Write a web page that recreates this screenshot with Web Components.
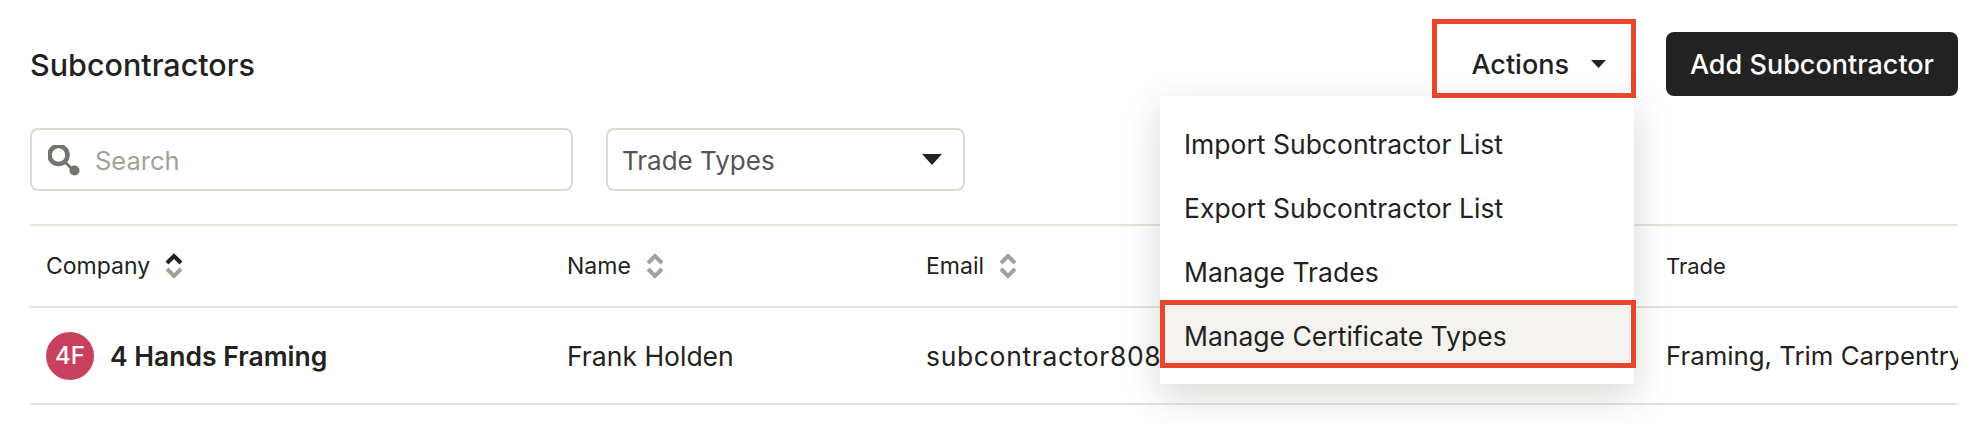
<!DOCTYPE html>
<html>
<head>
<meta charset="utf-8">
<style>
  html, body { margin: 0; background: #fff; }
  body { font-family: "Inter", "Liberation Sans", sans-serif; color: #222; overflow: hidden; height: 424px; }
  .email { letter-spacing: .65px; }
  .trade { font-size: 25.8px; }
  .trade-head { font-size: 22px; }
</style>
</head>
<body>
<sub-page>
  <page-header slot="header" title="Subcontractors">
    <actions-menu label="Actions">
      <menu-item>Import Subcontractor List</menu-item>
      <menu-item>Export Subcontractor List</menu-item>
      <menu-item>Manage Trades</menu-item>
      <menu-item marked>Manage Certificate Types</menu-item>
    </actions-menu>
    <dark-button>Add Subcontractor</dark-button>
  </page-header>
  <filter-bar slot="filters">
    <search-box placeholder="Search"></search-box>
    <select-box label="Trade Types"></select-box>
  </filter-bar>
  <table-row head>
    <sort-head active>Company</sort-head>
    <sort-head>Name</sort-head>
    <sort-head>Email</sort-head>
    <span class="trade-head">Trade</span>
  </table-row>
  <table-row>
    <company-cell initials="4F">4 Hands Framing</company-cell>
    <span>Frank Holden</span>
    <span class="email">subcontractor8086</span>
    <span class="trade">Framing, Trim Carpentry</span>
  </table-row>
</sub-page>

<script>
class SubPage extends HTMLElement {
  constructor() {
    super();
    this.attachShadow({mode: "open"}).innerHTML = `
    <style>
      :host { display: block; padding: 32px 26px 0 30px; }
      .filters { margin: 32px 0 33px; }
      .table { border-top: 2px solid #e4e3dc; overflow: hidden; }
    </style>
    <slot name="header"></slot>
    <div class="filters"><slot name="filters"></slot></div>
    <div class="table"><slot></slot></div>`;
  }
}

class PageHeader extends HTMLElement {
  constructor() {
    super();
    this.attachShadow({mode: "open"}).innerHTML = `
    <style>
      :host { display: flex; align-items: center; justify-content: space-between; height: 64px; position: relative; z-index: 5; }
      .title { font-size: 30.5px; font-weight: 500; }
      .right { display: flex; align-items: center; gap: 30px; }
    </style>
    <div class="title"></div>
    <div class="right"><slot></slot></div>`;
  }
  connectedCallback() {
    this.shadowRoot.querySelector(".title").textContent = this.getAttribute("title");
  }
}

class ActionsMenu extends HTMLElement {
  constructor() {
    super();
    this.attachShadow({mode: "open"}).innerHTML = `
    <style>
      :host { display: block; position: relative; width: 204px; height: 64px; }
      .btn { height: 64px; display: flex; align-items: center; justify-content: flex-end; gap: 22px; padding-right: 30px; font-size: 27px; font-weight: 500; box-sizing: border-box; }
      .btn svg { display: block; }
      .mark { position: absolute; left: 0; right: 0; top: -13px; bottom: -2px; border: 5px solid #e8452c; pointer-events: none; z-index: 2; }
      .menu { position: absolute; top: 64px; right: 2px; width: 474px; box-sizing: border-box; padding: 16px 0; background: #fff; box-shadow: 0 12px 36px rgba(40,38,30,.18); }
    </style>
    <div class="btn"><span class="label"></span><svg width="15" height="8" viewBox="0 0 15 8"><path d="M0 0h15L7.5 8z" fill="#222"/></svg></div>
    <div class="menu"><slot></slot></div>
    <div class="mark"></div>`;
  }
  connectedCallback() {
    this.shadowRoot.querySelector(".label").textContent = this.getAttribute("label");
  }
}

class MenuItem extends HTMLElement {
  constructor() {
    super();
    this.attachShadow({mode: "open"}).innerHTML = `
    <style>
      :host { display: flex; align-items: center; height: 64px; padding-left: 24px; font-size: 26.5px; position: relative; }
      :host([marked]) { background: #f5f3ef; }
      :host([marked])::after { content: ""; position: absolute; left: 0; right: -2px; top: -4px; bottom: 0; border: 5px solid #e8452c; }
    </style>
    <slot></slot>`;
  }
}

class DarkButton extends HTMLElement {
  constructor() {
    super();
    this.attachShadow({mode: "open"}).innerHTML = `
    <style>
      :host { display: flex; align-items: center; justify-content: center; width: 292px; height: 64px; background: #222; color: #fff; border-radius: 8px; font-size: 27px; font-weight: 500; }
    </style>
    <slot></slot>`;
  }
}

class FilterBar extends HTMLElement {
  constructor() {
    super();
    this.attachShadow({mode: "open"}).innerHTML = `
    <style>:host { display: flex; gap: 33px; }</style>
    <slot></slot>`;
  }
}

class SearchBox extends HTMLElement {
  constructor() {
    super();
    this.attachShadow({mode: "open"}).innerHTML = `
    <style>
      :host { display: flex; align-items: center; gap: 13px; width: 543px; height: 63px; box-sizing: border-box; border: 2px solid #dedad2; border-radius: 8px; padding-left: 16px; font-size: 25.5px; color: #a3a195; }
      svg { display: block; margin-top: 2px; }
      .ph { padding-top: 2px; }
    </style>
    <svg width="34" height="32" viewBox="0 0 34 32">
      <circle cx="10.5" cy="10" r="9" fill="none" stroke="#75746c" stroke-width="4.5"/>
      <path d="M17 17l8 8" stroke="#75746c" stroke-width="3"/>
      <circle cx="26.5" cy="25.5" r="5" fill="#75746c"/>
    </svg>
    <span class="ph"></span>`;
  }
  connectedCallback() {
    this.shadowRoot.querySelector(".ph").textContent = this.getAttribute("placeholder");
  }
}

class SelectBox extends HTMLElement {
  constructor() {
    super();
    this.attachShadow({mode: "open"}).innerHTML = `
    <style>
      :host { display: flex; align-items: center; justify-content: space-between; width: 359px; height: 63px; box-sizing: border-box; border: 2px solid #dedad2; border-radius: 8px; padding: 0 21px 0 14px; font-size: 26px; color: #555; }
      .label { padding-top: 2px; }
    </style>
    <span class="label"></span>
    <svg width="20" height="11" viewBox="0 0 20 11"><path d="M0 0h20L10 11z" fill="#222"/></svg>`;
  }
  connectedCallback() {
    this.shadowRoot.querySelector(".label").textContent = this.getAttribute("label");
  }
}

class TableRow extends HTMLElement {
  constructor() {
    super();
    this.attachShadow({mode: "open"}).innerHTML = `
    <style>
      :host { display: grid; grid-template-columns: 521px 359px 740px 1fr; align-items: center; height: 95px; border-bottom: 2px solid #e4e3dc; font-size: 26.5px; white-space: nowrap; padding-left: 16px; }
      :host([head]) { height: 80px; font-size: 23px; }
      ::slotted(*) { min-width: 0; }
    </style>
    <slot></slot>`;
  }
}

class SortHead extends HTMLElement {
  constructor() {
    super();
    this.attachShadow({mode: "open"}).innerHTML = `
    <style>
      :host { display: flex; align-items: center; gap: 15px; }
      svg { display: block; }
    </style>
    <slot></slot>
    <svg width="18" height="28" viewBox="0 0 18 28" fill="none" stroke-width="4">
      <path class="up" d="M2 11l7-7 7 7" stroke="#a3a195"/>
      <path d="M2 17l7 7 7-7" stroke="#a3a195"/>
    </svg>`;
  }
  connectedCallback() {
    if (this.hasAttribute("active")) this.shadowRoot.querySelector(".up").setAttribute("stroke", "#222");
  }
}

class CompanyCell extends HTMLElement {
  constructor() {
    super();
    this.attachShadow({mode: "open"}).innerHTML = `
    <style>
      :host { display: flex; align-items: center; gap: 16px; font-weight: 600; }
      .av { width: 48px; height: 48px; border-radius: 50%; background: #c9405f; color: #fff; display: flex; align-items: center; justify-content: center; font-size: 24px; font-weight: 500; }
    </style>
    <div class="av"></div>
    <slot></slot>`;
  }
  connectedCallback() {
    this.shadowRoot.querySelector(".av").textContent = this.getAttribute("initials");
  }
}

customElements.define("sub-page", SubPage);
customElements.define("page-header", PageHeader);
customElements.define("actions-menu", ActionsMenu);
customElements.define("menu-item", MenuItem);
customElements.define("dark-button", DarkButton);
customElements.define("filter-bar", FilterBar);
customElements.define("search-box", SearchBox);
customElements.define("select-box", SelectBox);
customElements.define("table-row", TableRow);
customElements.define("sort-head", SortHead);
customElements.define("company-cell", CompanyCell);
</script>
</body>
</html>
